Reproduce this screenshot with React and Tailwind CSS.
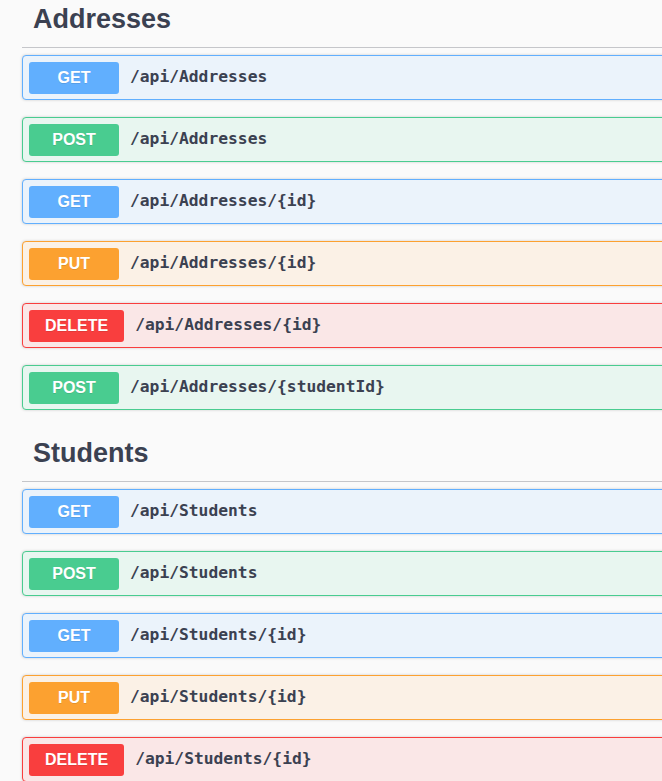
const sections = [
  {
    name: 'Addresses',
    ops: [
      { method: 'GET', path: '/api/Addresses' },
      { method: 'POST', path: '/api/Addresses' },
      { method: 'GET', path: '/api/Addresses/{id}' },
      { method: 'PUT', path: '/api/Addresses/{id}' },
      { method: 'DELETE', path: '/api/Addresses/{id}' },
      { method: 'POST', path: '/api/Addresses/{studentId}' },
    ],
  },
  {
    name: 'Students',
    ops: [
      { method: 'GET', path: '/api/Students' },
      { method: 'POST', path: '/api/Students' },
      { method: 'GET', path: '/api/Students/{id}' },
      { method: 'PUT', path: '/api/Students/{id}' },
      { method: 'DELETE', path: '/api/Students/{id}' },
    ],
  },
];

// swagger-ui method colours
const styles = {
  GET: { block: 'border-[#61affe] bg-[#ebf3fb]', badge: 'bg-[#61affe]' },
  POST: { block: 'border-[#49cc90] bg-[#e8f6f0]', badge: 'bg-[#49cc90]' },
  PUT: { block: 'border-[#fca130] bg-[#fbf1e6]', badge: 'bg-[#fca130]' },
  DELETE: { block: 'border-[#f93e3e] bg-[#fae7e7]', badge: 'bg-[#f93e3e]' },
};

function OpBlock({ method, path }) {
  const s = styles[method];
  return (
    <div
      className={`flex items-center h-[45px] pl-[6px] border rounded-[4px] shadow-[0_0_3px_rgba(0,0,0,0.19)] mb-[17px] ${s.block}`}
    >
      <div
        className={`h-[32px] min-w-[90px] px-4 flex items-center justify-center rounded-[3px] text-white text-[16px] font-bold [text-shadow:0_1px_0_rgba(0,0,0,0.1)] ${s.badge}`}
        style={{ fontFamily: '"Liberation Sans", Arial, sans-serif' }}
      >
        {method}
      </div>
      <span
        className="ml-[11px] text-[16.3px] font-bold text-[#3b4151]"
        style={{ fontFamily: '"DejaVu Sans Mono", "Liberation Mono", monospace' }}
      >
        {path}
      </span>
    </div>
  );
}

export default function App() {
  return (
    <div className="w-[662px] h-[781px] overflow-hidden bg-[#fafafa]">
      <div className="ml-[22px] w-[700px]">
        {sections.map((sec, i) => (
          <div key={sec.name} className={i > 0 ? 'mt-[24px]' : ''}>
            <h3
              className="pt-[4px] pb-[12px] pl-[11px] leading-[31px] text-[27px] font-bold text-[#3b4151] border-b border-[#c5c6ca]"
              style={{ fontFamily: '"Liberation Sans", Arial, sans-serif' }}
            >
              {sec.name}
            </h3>
            <div className="mt-[7px]">
              {sec.ops.map((op, j) => (
                <OpBlock key={j} {...op} />
              ))}
            </div>
          </div>
        ))}
      </div>
    </div>
  );
}
